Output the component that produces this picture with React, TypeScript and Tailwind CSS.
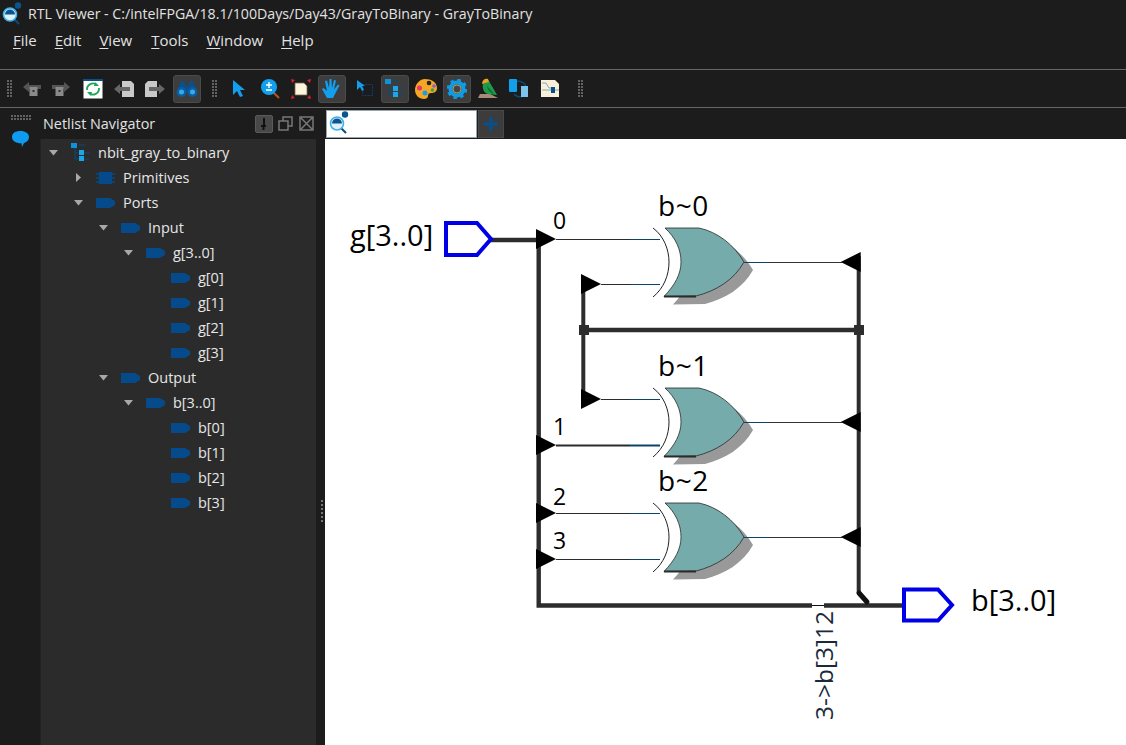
import React from "react";

const UI_FONT = "font-['Open_Sans','Noto_Sans',sans-serif]";

const Grip = ({ cols = 2, rows = 6 }: { cols?: number; rows?: number }) => {
  const cells = [];
  for (let c = 0; c < cols; c++) {
    for (let r = 0; r < rows; r++) {
      cells.push(<rect key={c + "-" + r} x={c * 3} y={r * 3} width="2" height="2" fill="#626262" />);
    }
  }
  return (
    <svg width={cols * 3} height={rows * 3} className="block">
      {cells}
    </svg>
  );
};

const LogoIcon = () => (
  <svg width="22" height="24" viewBox="0 0 22 24">
    <path d="M12 17l5 5" stroke="#0b4a7c" strokeWidth="2" />
    <circle cx="8" cy="12.500" r="6.500" fill="#dff1fa" stroke="#3fb1e6" strokeWidth="1.600" />
    <path d="M3 12.500a5 5 0 0 1 10 0z" fill="#0a5590" />
    <circle cx="16" cy="3.500" r="3.200" fill="#0a5590" />
  </svg>
);

const PortIcon = () => (
  <svg width="20" height="10" viewBox="0 0 20 10">
    <path d="M0 0h14l5 3v4l-5 3H0z" fill="#054a8a" />
  </svg>
);

const ChipIcon = () => (
  <svg width="20" height="12" viewBox="0 0 20 12">
    <rect x="3" y="0" width="13" height="12" fill="#054a8a" />
    <path d="M0 2h19M0 6h19M0 10h19" stroke="#054a8a" strokeWidth="1.500" />
  </svg>
);

const HierIcon = () => (
  <svg width="20" height="20" viewBox="0 0 20 20">
    <path d="M4 5v11h5M4 10h5M13 10h6M13 16h5M8 2h6" stroke="#0a4a78" strokeWidth="1" fill="none" />
    <rect x="0" y="0" width="6" height="5" fill="#0f93d8" />
    <rect x="8" y="7" width="5" height="5" fill="#1ba6ea" />
    <rect x="8" y="13" width="5" height="5" fill="#1ba6ea" />
  </svg>
);

const Tri = ({ open }: { open: boolean }) =>
  open ? (
    <svg width="10" height="6" viewBox="0 0 10 6">
      <path d="M0 0h9L4.500 5.500z" fill="#a8a8a8" />
    </svg>
  ) : (
    <svg width="6" height="10" viewBox="0 0 6 10">
      <path d="M0 0v9l5-4.500z" fill="#a8a8a8" />
    </svg>
  );

const tree = [
  { label: "nbit_gray_to_binary", pad: "pl-[4px]", open: true, icon: "hier" },
  { label: "Primitives", pad: "pl-[29px]", open: false, icon: "chip" },
  { label: "Ports", pad: "pl-[29px]", open: true, icon: "port" },
  { label: "Input", pad: "pl-[54px]", open: true, icon: "port" },
  { label: "g[3..0]", pad: "pl-[79px]", open: true, icon: "port" },
  { label: "g[0]", pad: "pl-[104px]", icon: "port" },
  { label: "g[1]", pad: "pl-[104px]", icon: "port" },
  { label: "g[2]", pad: "pl-[104px]", icon: "port" },
  { label: "g[3]", pad: "pl-[104px]", icon: "port" },
  { label: "Output", pad: "pl-[54px]", open: true, icon: "port" },
  { label: "b[3..0]", pad: "pl-[79px]", open: true, icon: "port" },
  { label: "b[0]", pad: "pl-[104px]", icon: "port" },
  { label: "b[1]", pad: "pl-[104px]", icon: "port" },
  { label: "b[2]", pad: "pl-[104px]", icon: "port" },
  { label: "b[3]", pad: "pl-[104px]", icon: "port" },
];

const Tool = ({ active, className, children }: { active?: boolean; className: string; children: React.ReactNode }) => (
  <div
    className={`w-[28px] h-[28px] shrink-0 rounded-[3px] flex items-center justify-center ${className} ${
      active ? "bg-[#3d3d3d] border border-[#4a4a4a]" : ""
    }`}
  >
    {children}
  </div>
);

const ArrowBox = ({ flip }: { flip?: boolean }) => (
  <svg width="18" height="14" viewBox="0 0 18 14" className={flip ? "-scale-x-100" : ""}>
    <path d="M0 5l6-5v3h12v4H6v3z" fill="#555" />
    <rect x="6.500" y="5" width="8" height="9" fill="#8a8a8a" />
    <rect x="9.500" y="8" width="2" height="2" fill="#333" />
  </svg>
);

const DocArrow = ({ flip }: { flip?: boolean }) => (
  <svg width="20" height="16" viewBox="0 0 20 16" className={flip ? "-scale-x-100" : ""}>
    <path d="M8 0h9l3 3v13H8z" fill="#c9c9c9" />
    <path d="M0 8l6-5v3h10v4H6v3z" fill="#666" />
  </svg>
);

const Gate = ({ dy }: { dy: number }) => {
  const body = "M665 228L699 228C718 232 734 245 744 262C734 280 716 291 696 296L664 296.500C675 285 681 274 681 262C681 250 676 238 665 228Z";
  return (
    <g transform={`translate(0 ${dy})`}>
      <path d={body} transform="translate(9 8)" fill="#999999" />
      <path d={body} fill="#76abab" stroke="#2a2a2a" strokeWidth="0.800" />
      <path d="M664 296.500L696 296.500" stroke="#2a2a2a" strokeWidth="2" />
      <path d="M653 228C664 236 669 250 669 262C669 275 664 288 653 297" stroke="#222" strokeWidth="1" fill="none" />
      <path d="M744 262.500H767" stroke="#0b4468" strokeWidth="1" />
      <path d="M767 262.500H842" stroke="#333" strokeWidth="1" />
    </g>
  );
};

const InWire = ({ x, y, heavy }: { x: number; y: number; heavy?: boolean }) => (
  <g>
    <path d={`M${x} ${y + 0.5}H630`} stroke="#2b2b2b" strokeWidth={heavy ? 2 : 1} />
    <path d={`M630 ${y + 0.5}H660`} stroke="#0b4468" strokeWidth={heavy ? 2 : 1} />
    <path d={`M${x - 20} ${y - 10}L${x} ${y}L${x - 20} ${y + 10}Z`} fill="#000" />
  </g>
);

const Diagram = () => (
  <svg width="801" height="606" viewBox="325 139 801 606" className="block">
    <g stroke="#2d2d2d" strokeWidth="4" fill="none">
      <path d="M490 240H538.700V605.500H812" strokeWidth="4.400" />
      <path d="M824 605.500H904" strokeWidth="4.400" />
      <path d="M583.300 284V399" />
      <path d="M583.300 330H858.500" strokeWidth="4.400" />
      <path d="M858.700 256V593" />
    </g>
    <path d="M812 605.500H824" stroke="#111" strokeWidth="1" />
    <path d="M859 593L867 602" stroke="#111" strokeWidth="5" strokeLinecap="round" />
    <rect x="579" y="325" width="10" height="10" fill="#2d2d2d" />
    <rect x="854" y="325" width="10" height="10" fill="#2d2d2d" />

    <InWire x={556} y={239} />
    <InWire x={601} y={284} />
    <InWire x={601} y={399} />
    <InWire x={556} y={445} heavy />
    <InWire x={556} y={513} />
    <InWire x={556} y={559} />

    <Gate dy={0} />
    <Gate dy={160} />
    <Gate dy={275} />

    <path d="M840.700 262L860.700 252V272Z" fill="#000" />
    <path d="M840.700 422L860.700 412V432Z" fill="#000" />
    <path d="M840.700 537L860.700 527V547Z" fill="#000" />

    <path d="M446 223H477L491 239L477 255H446Z" fill="#fff" stroke="#0000e6" strokeWidth="4" />
    <path d="M904 589.500H938L952 605L938 620.500H904Z" fill="#fff" stroke="#0000e6" strokeWidth="4" />

    <g fill="#000" fontFamily="'Open Sans','Noto Sans',sans-serif">
      <text x="350" y="245.500" fontSize="29">g[3..0]</text>
      <text x="971" y="611" fontSize="29">b[3..0]</text>
      <text x="658" y="216" fontSize="28" letterSpacing="0.500">b~0</text>
      <text x="658" y="376" fontSize="28" letterSpacing="0.500">b~1</text>
      <text x="658" y="491" fontSize="28" letterSpacing="0.500">b~2</text>
      <text x="553" y="228.500" fontSize="23">0</text>
      <text x="553" y="434.500" fontSize="23">1</text>
      <text x="553" y="505" fontSize="23">2</text>
      <text x="553" y="549" fontSize="23">3</text>
      <text transform="translate(833 720) rotate(-90)" fontSize="24.500" fill="#1a2a3a">
        3-&gt;b[3]12
      </text>
    </g>
  </svg>
);

export default function App() {
  const menus = [
    ["F", "ile", "ml-0"],
    ["E", "dit", "ml-[18px]"],
    ["V", "iew", "ml-[18px]"],
    ["T", "ools", "ml-[19px]"],
    ["W", "indow", "ml-[18px]"],
    ["H", "elp", "ml-[18px]"],
  ];
  return (
    <div className={`w-[1126px] h-[745px] overflow-hidden flex flex-col bg-[#1c1c1c] text-[#e2e2e2] ${UI_FONT}`}>
      {/* title bar */}
      <div className="h-[28px] flex items-center pl-[2px] gap-[4px] text-[14.2px] shrink-0">
        <LogoIcon />
        <span>RTL Viewer - C:/intelFPGA/18.1/100Days/Day43/GrayToBinary - GrayToBinary</span>
      </div>
      {/* menu */}
      <div className="h-[25px] flex items-center pl-[13px] text-[15px] shrink-0">
        {menus.map((m) => (
          <span key={m[0]} className={m[2]}>
            <span className="underline underline-offset-2">{m[0]}</span>
            {m[1]}
          </span>
        ))}
      </div>
      <div className="h-[16px] shrink-0" />
      {/* toolbar */}
      <div className="h-[39px] shrink-0 flex items-center border-y border-[#666]">
        <div className="ml-[7px]"><Grip /></div>
        <Tool className="ml-[5px]"><ArrowBox /></Tool>
        <Tool className="ml-[1px]"><ArrowBox flip /></Tool>
        <Tool className="ml-[4px]">
          <svg width="20" height="20" viewBox="0 0 20 20">
            <rect x="0.500" y="0.500" width="19" height="19" fill="#fff" />
            <path d="M0 1h20" stroke="#0a4f8a" strokeWidth="2" />
            <path d="M4 11a6 6 0 0 1 10-5M16 9a6 6 0 0 1-10 5" stroke="#1fa55a" strokeWidth="1.800" fill="none" />
            <path d="M12 3l4 4-5 0zM8 17l-4-4 5 0z" fill="#1fa55a" />
          </svg>
        </Tool>
        <Tool className="ml-[3px]"><DocArrow /></Tool>
        <Tool className="ml-[3px]"><DocArrow flip /></Tool>
        <Tool active className="ml-[4px]">
          <svg width="22" height="18" viewBox="0 0 22 18">
            <path d="M5 1h3l2 5h2l2-5h3l4 11H1z" fill="#0a4f8a" />
            <circle cx="5.500" cy="12" r="5" fill="#0a5da0" />
            <circle cx="16.500" cy="12" r="5" fill="#0a5da0" />
            <circle cx="5.500" cy="12" r="2.500" fill="#39a9ea" />
            <circle cx="16.500" cy="12" r="2.500" fill="#39a9ea" />
          </svg>
        </Tool>
        <div className="ml-[11px]"><Grip /></div>
        <Tool className="ml-[7px]">
          <svg width="14" height="17" viewBox="0 0 14 17">
            <path d="M1 0l12 10H8l3 6-3 1-3-6-4 4z" fill="#12a0ee" />
          </svg>
        </Tool>
        <Tool className="ml-[4px]">
          <svg width="20" height="20" viewBox="0 0 20 20">
            <path d="M11 12l7 7" stroke="#b5561f" strokeWidth="2" />
            <circle cx="8" cy="8" r="8" fill="#12a0ee" />
            <path d="M5 6h6M8 3v6M5 11h6" stroke="#fff" strokeWidth="1.400" />
          </svg>
        </Tool>
        <Tool className="ml-[2px]">
          <svg width="20" height="20" viewBox="0 0 20 20">
            <path d="M4 4h9l3 3v9H4z" fill="#fdf6dc" stroke="#7a6a50" strokeWidth="0.800" />
            <path d="M0 0l4 1-3 3zM20 0l-4 1 3 3zM0 20l4-1-3-3zM20 20l-4-1 3-3z" fill="#d6222a" />
          </svg>
        </Tool>
        <Tool active className="ml-[3px]">
          <svg width="22" height="21" viewBox="0 0 22 21">
            <path d="M6 20L1 11l1.500-1L6 13 4 3l2-.5L8 10 8.500 1h2l.5 9 2-8 2 .5-2 9 4-5 1.500 1L14 16l-2 4z" fill="#12a0ee" />
          </svg>
        </Tool>
        <Tool className="ml-[5px]">
          <svg width="18" height="18" viewBox="0 0 18 18">
            <rect x="6.500" y="4.500" width="10" height="11" fill="none" stroke="#0a3f6e" strokeDasharray="2 1" />
            <path d="M1 0l8 6H6l2 4-2 1-2-4-3 3z" fill="#12a0ee" />
          </svg>
        </Tool>
        <Tool active className="ml-[2px]"><HierIcon /></Tool>
        <Tool className="ml-[3px]">
          <svg width="22" height="20" viewBox="0 0 22 20">
            <path d="M10 0c6 0 12 3 12 9 0 4-3 5-6 5-2 0-3 1-3 3 0 2-2 3-4 3-5 0-9-4-9-9S4 0 10 0z" fill="#f5a623" />
            <circle cx="14" cy="4" r="2.300" fill="#222" />
            <circle cx="19" cy="7" r="1.800" fill="#8a5fd0" />
            <circle cx="17.500" cy="11" r="1.800" fill="#3aa648" />
            <circle cx="4.500" cy="9" r="2.500" fill="#e8336d" />
            <circle cx="10" cy="14" r="2.500" fill="#12a0ee" />
          </svg>
        </Tool>
        <Tool active className="ml-[3px]">
          <svg width="20" height="20" viewBox="0 0 20 20">
            <circle cx="10" cy="10" r="6.500" fill="none" stroke="#0f9be6" strokeWidth="4" />
            <circle cx="10" cy="10" r="9" fill="none" stroke="#0f9be6" strokeWidth="2.500" strokeDasharray="3.500 3.570" />
            <circle cx="10" cy="10" r="4" fill="#444" stroke="#b79a4a" strokeWidth="1" />
          </svg>
        </Tool>
        <Tool className="ml-[3px]">
          <svg width="20" height="21" viewBox="0 0 20 21">
            <path d="M0 20l2-4h10l8 4z" fill="#a88a78" />
            <path d="M5 5c0-3 4-5 6-2l8 14-9-1C6 15 4 11 5 5z" fill="#1f9a4a" />
            <path d="M4 6c0-4 3-6 6-5l1 3-4 1z" fill="#f0a020" />
            <path d="M9 8c2 2 5 5 7 8-3-1-6-3-7-8z" fill="#0d6e35" />
          </svg>
        </Tool>
        <Tool className="ml-[3px]">
          <svg width="20" height="20" viewBox="0 0 20 20">
            <path d="M8 2c5 0 9 3 9 6M16 16c-2 2-8 3-11-1" stroke="#0a4a78" strokeWidth="1.500" fill="none" />
            <rect x="0" y="0" width="8" height="13" rx="1" fill="#12a0ee" />
            <rect x="12" y="7" width="7" height="11" fill="#7cc6ee" />
          </svg>
        </Tool>
        <Tool className="ml-[3px]">
          <svg width="18" height="17" viewBox="0 0 18 17">
            <path d="M0 0h14l4 4v13H0z" fill="#f8f0d8" />
            <path d="M1 3h4l3 5h3M1 10h9M13 10h5" stroke="#5a9ac0" strokeWidth="0.800" fill="none" />
            <rect x="10" y="7" width="4" height="6" fill="#0a4f8a" />
          </svg>
        </Tool>
        <div className="ml-[14px]"><Grip /></div>
      </div>
      {/* body */}
      <div className="flex-1 flex min-h-0">
        <div className="w-[40px] shrink-0 flex flex-col items-start pl-[11px] pt-[7px] gap-[10px]">
          <Grip cols={7} rows={2} />
          <svg width="17" height="17" viewBox="0 0 17 17" className="ml-[1px]">
            <path d="M8.500 0c5 0 8.500 2.500 8.500 6s-3 5.500-5 6l-2 4-.5-3.700C4 12.500 0 10 0 6s3.500-6 8.500-6z" fill="#0e9cf0" />
          </svg>
        </div>
        <div className="w-[276px] shrink-0 flex flex-col">
          <div className="h-[31px] shrink-0 flex items-center pl-[3px] pr-[1px] text-[14.4px]">
            <span className="flex-1">Netlist Navigator</span>
            <div className="flex items-center gap-[3px]">
              <div className="w-[18px] h-[18px] bg-[#484848] border border-[#5a5a5a] rounded-[2px] flex items-center justify-center">
                <svg width="6" height="12" viewBox="0 0 6 12"><path d="M3 0v7M0 8h5M2.500 8v4" stroke="#111" strokeWidth="2" /></svg>
              </div>
              <div className="w-[18px] h-[18px] flex items-center justify-center">
                <svg width="15" height="15" viewBox="0 0 15 15"><path d="M5 5V1h9v9h-4M1 5h9v9H1z" fill="none" stroke="#777" strokeWidth="1.500" /></svg>
              </div>
              <div className="w-[18px] h-[18px] flex items-center justify-center">
                <svg width="15" height="15" viewBox="0 0 15 15"><path d="M1 1h13v13H1zM2 2l11 11M13 2L2 13" fill="none" stroke="#777" strokeWidth="1.500" /></svg>
              </div>
            </div>
          </div>
          <div className="flex-1 bg-[#2b2b2b] border-l border-[#222] pt-[1px] text-[14.5px]">
            {tree.map((row) => (
              <div key={row.label} className={`h-[25px] flex items-center ${row.pad}`}>
                <div className="w-[17px] mr-[9px] flex items-center justify-center shrink-0">
                  {row.open !== undefined && <Tri open={row.open} />}
                </div>
                <div className="w-[27px] flex items-center shrink-0">
                  {row.icon === "hier" ? <HierIcon /> : row.icon === "chip" ? <ChipIcon /> : <PortIcon />}
                </div>
                <span className="text-[#e6e6e6]">{row.label}</span>
              </div>
            ))}
          </div>
        </div>
        <div className="w-[9px] shrink-0 flex items-center justify-end pr-[2px]">
          <div className="w-[2px] h-[22px] mt-[168px] border-l-2 border-dotted border-[#777]" />
        </div>
        <div className="flex-1 flex flex-col min-w-0">
          <div className="h-[31px] shrink-0 flex items-end pb-[1px] pl-[1px]">
            <div className="w-[151px] h-[28px] bg-white border border-[#9aa6ae] pl-[2px] flex items-start">
              <LogoIcon />
            </div>
            <div className="ml-[1px] w-[26px] h-[28px] bg-[#3c3c3c] border border-[#484848] flex items-center justify-center">
              <svg width="14" height="14" viewBox="0 0 14 14"><path d="M7 0v14M0 7h14" stroke="#05508f" strokeWidth="3" /></svg>
            </div>
          </div>
          <div className="flex-1 bg-white min-h-0">
            <Diagram />
          </div>
        </div>
      </div>
    </div>
  );
}
